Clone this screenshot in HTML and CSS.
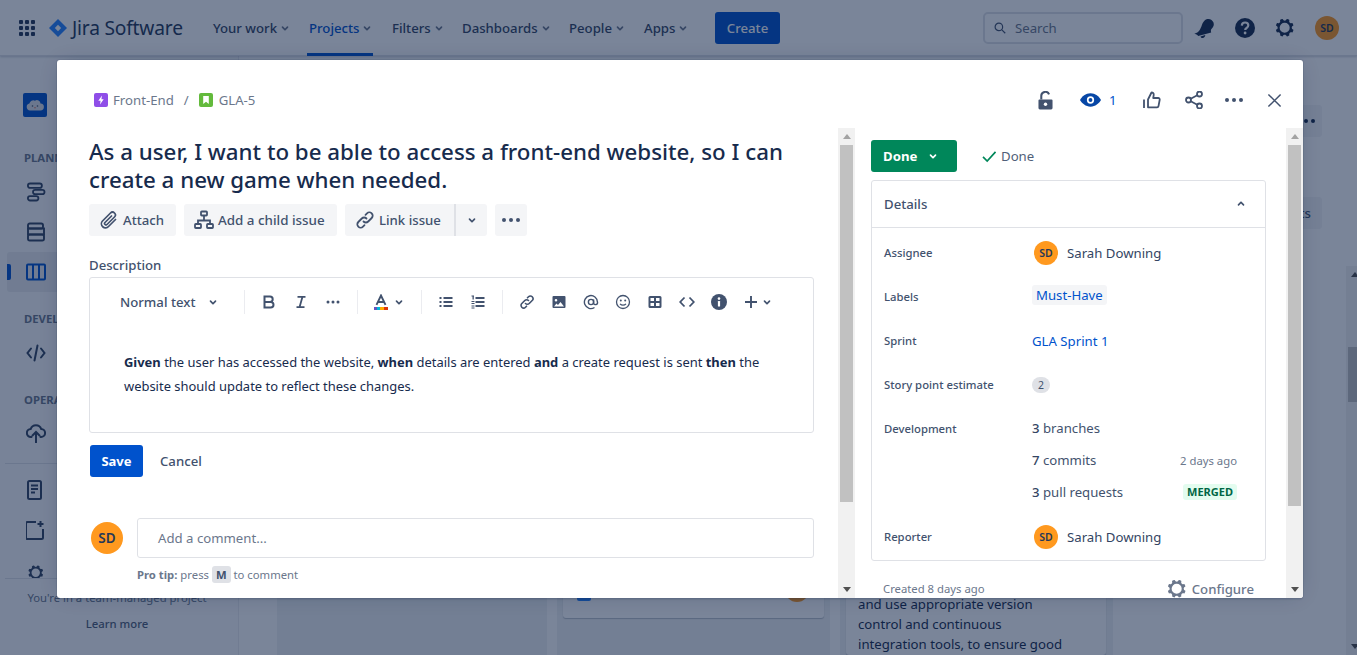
FILE: index.html
```html
<!DOCTYPE html>
<html lang="en">
<head>
<meta charset="utf-8">
<title>GLA-5 - Jira Software</title>
<link rel="stylesheet" href="styles.css">
</head>
<body>
<svg class="defs" width="0" height="0" aria-hidden="true">
  <defs>
    <symbol id="chev" viewBox="0 0 24 24"><path d="M8.292 10.293a1.009 1.009 0 0 0 0 1.419l2.939 2.965c.218.215.5.322.779.322s.556-.107.769-.322l2.93-2.955a1.01 1.01 0 0 0 0-1.419.987.987 0 0 0-1.406 0l-2.298 2.317-2.307-2.327a.99.99 0 0 0-1.406 0z" fill="currentColor"/></symbol>
    <symbol id="gear" viewBox="0 0 24 24"><path fill-rule="evenodd" fill="currentColor" d="M11.701 16.7a5.002 5.002 0 1 1 0-10.003 5.002 5.002 0 0 1 0 10.004m8.368-3.117a1.995 1.995 0 0 1-1.346-1.885c0-.876.563-1.613 1.345-1.885a.48.48 0 0 0 .315-.574 8.947 8.947 0 0 0-.836-1.993.477.477 0 0 0-.598-.195 2.04 2.04 0 0 1-1.29.08 1.988 1.988 0 0 1-1.404-1.395 2.04 2.04 0 0 1 .076-1.297.478.478 0 0 0-.196-.597 8.98 8.98 0 0 0-1.981-.823.477.477 0 0 0-.572.317 1.992 1.992 0 0 1-1.879 1.331 1.993 1.993 0 0 1-1.88-1.33.478.478 0 0 0-.573-.318 8.98 8.98 0 0 0-1.981.823.478.478 0 0 0-.196.597 2.04 2.04 0 0 1 .076 1.297 1.988 1.988 0 0 1-1.404 1.395 2.04 2.04 0 0 1-1.29-.08.477.477 0 0 0-.598.195 8.947 8.947 0 0 0-.836 1.993.48.48 0 0 0 .315.574 1.995 1.995 0 0 1 1.345 1.885c0 .876-.563 1.613-1.345 1.885a.48.48 0 0 0-.315.574c.2.705.482 1.374.836 1.993.12.21.376.29.598.195a2.04 2.04 0 0 1 1.29-.08 1.988 1.988 0 0 1 1.404 1.395 2.04 2.04 0 0 1-.076 1.297.478.478 0 0 0 .196.597c.62.354 1.286.63 1.981.823a.477.477 0 0 0 .572-.317 1.992 1.992 0 0 1 1.88-1.331c.875 0 1.613.561 1.88 1.33a.478.478 0 0 0 .573.318 8.98 8.98 0 0 0 1.981-.823.478.478 0 0 0 .196-.597 2.04 2.04 0 0 1-.076-1.297 1.988 1.988 0 0 1 1.404-1.395 2.04 2.04 0 0 1 1.29.08.477.477 0 0 0 .598-.195 8.947 8.947 0 0 0 .836-1.993.48.48 0 0 0-.315-.574"/></symbol>
    <symbol id="dots" viewBox="0 0 24 24"><circle cx="5" cy="12" r="2" fill="currentColor"/><circle cx="12" cy="12" r="2" fill="currentColor"/><circle cx="19" cy="12" r="2" fill="currentColor"/></symbol>
  </defs>
</svg>

<div class="app">
  <header class="topbar">
    <svg class="ico-grid" viewBox="0 0 16 16"><g fill="currentColor"><rect width="4" height="4" rx="1"/><rect x="6" width="4" height="4" rx="1"/><rect x="12" width="4" height="4" rx="1"/><rect y="6" width="4" height="4" rx="1"/><rect x="6" y="6" width="4" height="4" rx="1"/><rect x="12" y="6" width="4" height="4" rx="1"/><rect y="12" width="4" height="4" rx="1"/><rect x="6" y="12" width="4" height="4" rx="1"/><rect x="12" y="12" width="4" height="4" rx="1"/></g></svg>
    <svg class="logo" viewBox="0 0 18 18"><path fill="#2684ff" d="M9 0l9 9-9 9-9-9z"/><path fill="#fff" d="M9 5.800L12.200 9 9 12.200 5.800 9z"/></svg>
    <span class="brand">Jira Software</span>
    <nav class="nav">
      <span class="nav-item nav-w1">Your work<svg class="chev-s"><use href="#chev"/></svg></span>
      <span class="nav-item nav-w2 is-active">Projects<svg class="chev-s"><use href="#chev"/></svg></span>
      <span class="nav-item nav-w3">Filters<svg class="chev-s"><use href="#chev"/></svg></span>
      <span class="nav-item nav-w4">Dashboards<svg class="chev-s"><use href="#chev"/></svg></span>
      <span class="nav-item nav-w5">People<svg class="chev-s"><use href="#chev"/></svg></span>
      <span class="nav-item nav-w6">Apps<svg class="chev-s"><use href="#chev"/></svg></span>
    </nav>
    <button class="create">Create</button>
    <div class="search">
      <svg class="search-ico" viewBox="0 0 16 16"><circle cx="6.500" cy="6.500" r="5" fill="none" stroke="currentColor" stroke-width="1.600"/><path d="M10.500 10.500L15 15" stroke="currentColor" stroke-width="1.600"/></svg>
      <span>Search</span>
    </div>
    <svg class="top-ico bell" viewBox="0 0 24 24"><path fill="currentColor" d="M13.500 3.200c3.200-1 6 .6 7 3.400.8 2.400.1 4.200-1.800 6.100-1.100 1.100-.9 2.300-.5 3.700l-13 3.700c-.8-1.300-1.600-2-3.200-2.200l-.6-.1c2.600-1 4.400-1.900 5.600-4.300.7-1.400 1.200-2.500 1.900-4.600.9-2.700 2.600-4.900 4.600-5.700zM7.500 20.500l4.800-1.400c-.1 1.700-1.200 2.900-2.600 3-1 .1-1.800-.6-2.200-1.600z"/></svg>
    <svg class="top-ico help" viewBox="0 0 24 24"><circle cx="12" cy="12" r="10" fill="currentColor"/><path d="M8.800 9.600c.1-1.900 1.500-3.100 3.300-3.100 1.900 0 3.200 1.200 3.200 2.800 0 1.300-.6 2-1.700 2.700-.8.500-1.400 1-1.400 2" fill="none" stroke="#fff" stroke-width="2.200"/><circle cx="12.100" cy="17" r="1.400" fill="#fff"/></svg>
    <svg class="top-ico gear-top"><use href="#gear"/></svg>
    <span class="avatar avatar-top">SD</span>
  </header>

  <main class="main">
    <aside class="sidebar">
      <div class="side-nav">
        <div class="project-logo">
          <svg viewBox="0 0 24 24"><rect width="24" height="24" rx="2" fill="#0052cc"/><path fill="#dfe1e6" d="M7 17.500a3.500 3.500 0 0 1-.6-6.900A4 4 0 0 1 12 7.700a3.500 3.500 0 0 1 5.500 2.800 3.500 3.500 0 0 1-.2 7z"/><circle cx="9.500" cy="13" r=".8" fill="#42526e"/><circle cx="14.500" cy="13" r=".8" fill="#42526e"/><path d="M11 14.500h2l-1 1z" fill="#de350b"/></svg>
        </div>
        <div class="side-label side-label-first">PLANNING</div>
        <div class="side-item"><svg class="side-ico" viewBox="0 0 20 20" fill="none" stroke="currentColor" stroke-width="1.800"><rect x="1.900" y="1.500" width="14" height="4.400" rx="2.200"/><rect x="7" y="7.800" width="11.500" height="4.400" rx="2.200"/><rect x="1.900" y="14.100" width="10.500" height="4.400" rx="2.200"/></svg><span>Roadmap</span></div>
        <div class="side-item"><svg class="side-ico" viewBox="0 0 20 20" fill="none" stroke="currentColor" stroke-width="1.900"><rect x="2" y="1.500" width="15" height="5" rx="1.800"/><rect x="2" y="6.500" width="16" height="6"/><rect x="2" y="12.500" width="16" height="6" rx="1.800"/></svg><span>Backlog</span></div>
        <div class="side-item is-current"><svg class="side-ico" viewBox="0 0 20 20" fill="none" stroke="currentColor" stroke-width="2"><rect x="1" y="2.500" width="18" height="15" rx="1"/><path d="M7 2.500v15M13 2.500v15"/></svg><span>Board</span></div>
        <div class="side-label side-label-dev">DEVELOPMENT</div>
        <div class="side-item side-code"><svg class="side-ico" viewBox="0 0 20 20" fill="none" stroke="currentColor" stroke-width="2" stroke-linecap="round"><path d="M5 5.500L1.500 10 5 14.500M15 5.500l3.500 4.500-3.500 4.500M11.500 2.500l-3 15"/></svg><span>Code</span></div>
        <div class="side-label side-label-ops">OPERATIONS</div>
        <div class="side-item side-cloud"><svg class="side-ico" viewBox="0 0 20 20" fill="none" stroke="currentColor" stroke-width="2" stroke-linecap="round"><path d="M5.500 14H5a4 4 0 0 1-.3-8 5.500 5.500 0 0 1 10.500 0 4 4 0 0 1-.2 8h-.5"/><path d="M10 19.500V9.500M6.500 12.500L10 9l3.500 3.500"/></svg><span>Deployments</span></div>
        <div class="side-divider"></div>
        <div class="side-item"><svg class="side-ico" viewBox="0 0 20 20" fill="none" stroke="currentColor" stroke-width="2"><rect x="2" y="1" width="13" height="18" rx="1.500"/><path d="M5 5.500h7M5 9h7M5 12.500h4"/></svg><span>Pages</span></div>
        <div class="side-item"><svg class="side-ico" viewBox="0 0 20 20" fill="none" stroke="currentColor" stroke-width="2"><path d="M10 2H1.500A1.500 1.500 0 0 0 0 3.500v14A1.500 1.500 0 0 0 1.500 19h14a1.500 1.500 0 0 0 1.500-1.500V9"/><path d="M14.500 1v6M11.500 4h6"/></svg><span>Add shortcut</span></div>
        <div class="side-item"><svg class="side-ico side-gear"><use href="#gear"/></svg><span>Project settings</span></div>
      </div>
      <div class="side-foot">
        <div>You're in a team-managed project</div>
        <div class="side-learn">Learn more</div>
      </div>
    </aside>

    <section class="board">
      <div class="board-btn-row board-btn-more"><span class="board-btn board-btn-icon"><svg class="ico16"><use href="#dots"/></svg></span></div>
      <div class="board-btn-row board-btn-ins"><span class="board-btn">Insights</span></div>
      <div class="columns">
        <div class="column column-first"></div>
        <div class="column">
          <div class="card card-short">
            <span class="card-type"></span>
            <span class="card-av"></span>
          </div>
        </div>
        <div class="column">
          <div class="card card-long">
            <p>and use appropriate version control and continuous integration tools, to ensure good</p>
          </div>
        </div>
      </div>
    </section>

    <div class="page-scroll">
      <div class="sbar">
        <div class="sbar-up sbar-up-dark"></div>
        <div class="sbar-thumb sbar-thumb-page"></div>
        <div class="sbar-down"></div>
      </div>
    </div>
  </main>

  <div class="overlay"></div>

  <div class="modal">
    <div class="modal-head">
      <div class="crumbs">
        <svg class="crumb-ico" viewBox="0 0 14 14"><rect width="14" height="14" rx="2" fill="#8f4ee8"/><path d="M8 2.500L4.300 7.800h2.300L6 11.500l3.700-5.300H7.400z" fill="#fff"/></svg>
        <span class="crumb-text">Front-End</span>
        <span class="crumb-sep">/</span>
        <svg class="crumb-ico" viewBox="0 0 14 14"><rect width="14" height="14" rx="2" fill="#63ba3c"/><path d="M4.200 3h5.600v8L7 8.800 4.200 11z" fill="#fff"/></svg>
        <span class="crumb-text crumb-key">GLA-5</span>
      </div>
      <div class="head-actions">
        <svg class="act act-lock" viewBox="0 0 16 20"><path fill="currentColor" d="M1.500 9h13a1 1 0 0 1 1 1v8a1.500 1.500 0 0 1-1.500 1.500H2A1.500 1.500 0 0 1 .5 18v-8a1 1 0 0 1 1-1z"/><path fill="none" stroke="currentColor" stroke-width="2.200" d="M3.500 9V5a4.300 4.300 0 0 1 8.300-1.500"/><circle cx="8" cy="14" r="1.800" fill="#fff"/></svg>
        <svg class="act act-eye" viewBox="0 0 22 14"><path fill="#0747a6" d="M11 0c5 0 9 3.500 11 7-2 3.500-6 7-11 7S2 10.500 0 7c2-3.500 6-7 11-7z"/><circle cx="11" cy="7" r="3.800" fill="#fff"/><circle cx="11" cy="7" r="2" fill="#0747a6"/></svg>
        <span class="act-count">1</span>
        <svg class="act act-like" viewBox="0 0 18 18" fill="none" stroke="currentColor" stroke-width="1.800" stroke-linejoin="round"><path d="M1 8.500v8.500M5 8.500l3.500-7c1.500 0 2.500 1 2.200 2.600l-.5 2.900h5a1.500 1.500 0 0 1 1.500 1.800l-1.200 6.300a1.500 1.500 0 0 1-1.500 1.200H5z"/></svg>
        <svg class="act act-share" viewBox="0 0 18 18" fill="none" stroke="currentColor" stroke-width="1.800"><circle cx="3.500" cy="9" r="2.500"/><circle cx="14.500" cy="3" r="2.500"/><circle cx="14.500" cy="15" r="2.500"/><path d="M5.700 7.800l6.600-3.600M5.700 10.200l6.600 3.600"/></svg>
        <svg class="act act-more"><use href="#dots"/></svg>
        <svg class="act act-close" viewBox="0 0 16 16" fill="none" stroke="currentColor" stroke-width="1.600"><path d="M1.500 1.500l13 13M14.500 1.500l-13 13"/></svg>
      </div>
    </div>

    <div class="modal-body">
      <div class="pane-left">
        <h1 class="title">As a user, I want to be able to access a front-end website, so I can create a new game when needed.</h1>
        <div class="actions">
          <span class="btn btn-attach">
            <svg class="btn-ico" viewBox="0 0 20 20" fill="none" stroke="currentColor" stroke-width="1.700" stroke-linecap="round"><path d="M16.500 9.500l-7 7a4 4 0 0 1-6-5.500l8-8a2.800 2.800 0 0 1 4 4l-7.500 7.500a1.400 1.400 0 0 1-2-2l6.500-6.500"/></svg>Attach
          </span>
          <span class="btn btn-child">
            <svg class="btn-ico" viewBox="0 0 20 20" fill="none" stroke="currentColor" stroke-width="1.800"><rect x="7" y="1.500" width="6" height="4" rx=".8"/><rect x="1" y="14" width="6" height="4" rx=".8"/><rect x="13" y="14" width="6" height="4" rx=".8"/><path d="M10 5.500v4.500M4 14v-3.500h12V14"/></svg>Add a child issue
          </span>
          <span class="btn-split">
            <span class="btn btn-link">
              <svg class="btn-ico" viewBox="0 0 20 20" fill="none" stroke="currentColor" stroke-width="1.800" stroke-linecap="round"><path d="M8.500 11.500a3.300 3.300 0 0 0 4.700 0l3.500-3.500a3.300 3.300 0 0 0-4.700-4.700l-1.500 1.500"/><path d="M11.500 8.500a3.300 3.300 0 0 0-4.700 0l-3.500 3.500A3.300 3.300 0 0 0 8 16.700l1.500-1.500"/></svg>Link issue
            </span>
            <span class="btn btn-caret"><svg class="chev-m"><use href="#chev"/></svg></span>
          </span>
          <span class="btn btn-more"><svg class="ico-dots"><use href="#dots"/></svg></span>
        </div>

        <div class="desc-label">Description</div>
        <div class="editor">
          <div class="toolbar">
            <span class="tb-style">Normal text<svg class="chev-m"><use href="#chev"/></svg></span>
            <span class="tb-sep tb-sep-first"></span>
            <span class="tb-btn"><svg class="tb-ico" viewBox="0 0 16 16"><path fill="none" stroke="currentColor" stroke-width="2" d="M3.500 2.500h5.500a2.700 2.700 0 0 1 0 5.400H3.500zM3.500 7.900h6.200a2.800 2.800 0 0 1 0 5.600H3.500z"/></svg></span>
            <span class="tb-btn"><svg class="tb-ico" viewBox="0 0 16 16"><path fill="none" stroke="currentColor" stroke-width="1.800" d="M4.500 2.800h8M3.500 13.200h8M9.500 2.800L6.500 13.200"/></svg></span>
            <span class="tb-btn"><svg class="tb-ico" viewBox="0 0 16 16"><g fill="currentColor"><circle cx="3" cy="8" r="1.500"/><circle cx="8" cy="8" r="1.500"/><circle cx="13" cy="8" r="1.500"/></g></svg></span>
            <span class="tb-sep"></span>
            <span class="tb-color">
              <svg class="tb-ico tb-ico-a" viewBox="0 0 14 16"><path fill="none" stroke="currentColor" stroke-width="1.900" d="M2.500 10.800L7 1.500l4.500 9.300M4 8h6"/><rect x="0" y="13" width="3" height="3" fill="#6554c0"/><rect x="3" y="13" width="3" height="3" fill="#00b8d9"/><rect x="6" y="13" width="4" height="3" fill="#ffab00"/><rect x="10" y="13" width="4" height="3" fill="#de350b"/></svg>
              <svg class="chev-m"><use href="#chev"/></svg>
            </span>
            <span class="tb-sep"></span>
            <span class="tb-btn"><svg class="tb-ico" viewBox="0 0 16 16"><g fill="currentColor"><rect x="1.500" y="3" width="2" height="2"/><rect x="1.500" y="7" width="2" height="2"/><rect x="1.500" y="11" width="2" height="2"/><rect x="5.500" y="3" width="9" height="2"/><rect x="5.500" y="7" width="9" height="2"/><rect x="5.500" y="11" width="9" height="2"/></g></svg></span>
            <span class="tb-btn"><svg class="tb-ico" viewBox="0 0 16 16"><g fill="currentColor"><rect x="1.500" y="1.500" width="2.500" height="1"/><rect x="2.500" y="2" width="1.300" height="3.500"/><rect x="1.500" y="7" width="3" height="1"/><rect x="1.500" y="9" width="3" height="1"/><rect x="1.500" y="11.500" width="3" height="1"/><rect x="1.500" y="13.500" width="3" height="1"/><rect x="5.500" y="3" width="9" height="2"/><rect x="5.500" y="7" width="9" height="2"/><rect x="5.500" y="11" width="9" height="2"/></g></svg></span>
            <span class="tb-sep"></span>
            <span class="tb-btn"><svg class="tb-ico" viewBox="0 0 16 16" fill="none" stroke="currentColor" stroke-width="1.600" stroke-linecap="round"><path d="M6.500 9.500a2.600 2.600 0 0 0 3.700 0l3-3a2.600 2.600 0 0 0-3.700-3.700L8.500 3.800"/><path d="M9.500 6.500a2.600 2.600 0 0 0-3.700 0l-3 3a2.600 2.600 0 0 0 3.700 3.700l1-1"/></svg></span>
            <span class="tb-btn"><svg class="tb-ico" viewBox="0 0 16 16"><path fill="currentColor" fill-rule="evenodd" d="M2.500 2h11a1 1 0 0 1 1 1v10a1 1 0 0 1-1 1h-11a1 1 0 0 1-1-1V3a1 1 0 0 1 1-1zM5 5a1.300 1.300 0 1 0 0 2.600A1.300 1.300 0 0 0 5 5zM3 12.500h10l-3.500-4.500-2.500 3-1.500-1.500z"/></svg></span>
            <span class="tb-btn"><svg class="tb-ico" viewBox="0 0 16 16" fill="none" stroke="currentColor" stroke-width="1.400"><circle cx="8" cy="8" r="2.600"/><path d="M10.600 5.400v3.800a1.900 1.900 0 0 0 3.800-1.200A6.500 6.500 0 1 0 11.500 13.500"/></svg></span>
            <span class="tb-btn"><svg class="tb-ico" viewBox="0 0 16 16"><circle cx="8" cy="8" r="6.500" fill="none" stroke="currentColor" stroke-width="1.300"/><circle cx="5.800" cy="6.500" r="1" fill="currentColor"/><circle cx="10.200" cy="6.500" r="1" fill="currentColor"/><path d="M5 9.800c1.600 1.800 4.400 1.800 6 0" fill="none" stroke="currentColor" stroke-width="1.200"/></svg></span>
            <span class="tb-btn"><svg class="tb-ico" viewBox="0 0 16 16"><path fill="currentColor" fill-rule="evenodd" d="M3 2h10a1.500 1.500 0 0 1 1.500 1.500v9A1.500 1.500 0 0 1 13 14H3a1.500 1.500 0 0 1-1.500-1.500v-9A1.500 1.500 0 0 1 3 2zM3.500 4v3H7V4zM9 4v3h3.500V4zM3.500 9v3H7V9zM9 9v3h3.500V9z"/></svg></span>
            <span class="tb-btn"><svg class="tb-ico" viewBox="0 0 16 16" fill="none" stroke="currentColor" stroke-width="1.800"><path d="M5.500 3.500L1.200 8l4.300 4.500M10.500 3.500L14.800 8l-4.300 4.500"/></svg></span>
            <span class="tb-btn"><svg class="tb-ico tb-ico-info" viewBox="0 0 16 16"><circle cx="8" cy="8" r="8" fill="currentColor"/><rect x="6.900" y="7" width="2.200" height="5.500" rx=".6" fill="#fff"/><circle cx="8" cy="4.600" r="1.300" fill="#fff"/></svg></span>
            <span class="tb-btn"><svg class="tb-ico" viewBox="0 0 16 16"><path d="M8 2v12M2 8h12" stroke="currentColor" stroke-width="1.900" fill="none"/></svg></span>
            <svg class="chev-m chev-plus"><use href="#chev"/></svg>
          </div>
          <p class="editor-text"><strong>Given</strong> the user has accessed the website, <strong>when</strong> details are entered <strong>and</strong> a create request is sent <strong>then</strong> the website should update to reflect these changes.</p>
        </div>

        <div class="save-row">
          <span class="btn-save">Save</span>
          <span class="btn-cancel">Cancel</span>
        </div>

        <div class="comment">
          <span class="avatar avatar-lg">SD</span>
          <div class="comment-main">
            <div class="comment-input">Add a comment...</div>
            <div class="pro-tip"><strong>Pro tip:</strong> press <kbd class="key">M</kbd> to comment</div>
          </div>
        </div>
      </div>

      <div class="sbar">
        <div class="sbar-up"></div>
        <div class="sbar-thumb sbar-thumb-left"></div>
        <div class="sbar-down"></div>
      </div>

      <div class="pane-right">
        <div class="status-row">
          <span class="btn-status">Done<svg class="chev-m"><use href="#chev"/></svg></span>
          <svg class="check" viewBox="0 0 16 14"><path d="M1 7.500l4.500 4.500L14.500 2" fill="none" stroke="#00875a" stroke-width="1.800"/></svg>
          <span class="status-text">Done</span>
        </div>

        <div class="details">
          <div class="details-head">
            <span>Details</span>
            <svg class="chev-m chev-up"><use href="#chev"/></svg>
          </div>
          <dl class="rows">
            <div class="row row-assignee"><dt>Assignee</dt><dd class="person"><span class="avatar avatar-sm">SD</span>Sarah Downing</dd></div>
            <div class="row"><dt>Labels</dt><dd><span class="label-chip">Must-Have</span></dd></div>
            <div class="row"><dt>Sprint</dt><dd class="link">GLA Sprint 1</dd></div>
            <div class="row"><dt>Story point estimate</dt><dd class="points-cell"><span class="points">2</span></dd></div>
            <div class="row row-dev"><dt>Development</dt><dd class="dev-line"><span><b>3</b> branches</span></dd></div>
            <div class="row row-dev"><dt></dt><dd class="dev-line"><span><b>7</b> commits</span><span class="dev-meta">2 days ago</span></dd></div>
            <div class="row row-dev"><dt></dt><dd class="dev-line"><span><b>3</b> pull requests</span><span class="lozenge">MERGED</span></dd></div>
            <div class="row row-reporter"><dt>Reporter</dt><dd class="person"><span class="avatar avatar-sm">SD</span>Sarah Downing</dd></div>
          </dl>
        </div>

        <div class="meta-row">
          <span class="created">Created 8 days ago</span>
          <span class="configure"><svg class="cfg-ico"><use href="#gear"/></svg>Configure</span>
        </div>
      </div>

      <div class="sbar">
        <div class="sbar-up"></div>
        <div class="sbar-thumb sbar-thumb-right"></div>
        <div class="sbar-down"></div>
      </div>
    </div>
  </div>
</div>
</body>
</html>
```

FILE: styles.css
```css
* { box-sizing: border-box; }
html, body { margin: 0; padding: 0; }
body { font-family: "Noto Sans", "Open Sans", sans-serif; font-size: 13.2px; color: #172b4d; background: #fff; }
.defs { position: absolute; }
svg { display: block; flex-shrink: 0; }

.app { position: relative; width: 1357px; height: 655px; overflow: hidden; }

/* top bar */
.topbar { height: 56px; display: flex; align-items: center; background: #fff; border-bottom: 1px solid #dfe1e6; box-shadow: 0 1px 2px rgba(9,30,66,.2); color: #172b4d; position: relative; }
.ico-grid { width: 16px; height: 16px; margin-left: 19px; color: #253858; }
.logo { width: 18px; height: 18px; margin-left: 14px; }
.brand { margin-left: 5px; font-size: 19.2px; width: 133px; color: #253858; line-height: 24px; letter-spacing: -.2px; white-space: nowrap; }
.nav { display: flex; height: 56px; margin-left: 8px; }
.nav-item { display: flex; align-items: center; font-weight: 500; color: #344563; height: 56px; position: relative; white-space: nowrap; }
.nav-w1 { width: 96px; }
.nav-w2 { width: 83px; color: #0052cc; }
.nav-w3 { width: 70px; }
.nav-w4 { width: 107px; }
.nav-w5 { width: 75px; }
.nav-w6 { width: 71px; }
.is-active::after { content: ""; position: absolute; left: -2px; right: 19px; bottom: 0; height: 3px; background: #0052cc; }
.chev-s { width: 20px; height: 20px; margin-left: -2px; color: #6b778c; }
.create { width: 65px; height: 32px; border: 0; border-radius: 3px; background: #0052cc; color: #fff; font: 500 13.2px "Noto Sans", sans-serif; margin-left: 0; padding: 0; }
.search { margin-left: 203px; width: 200px; height: 32px; border: 2px solid #dfe1e6; border-radius: 5px; display: flex; align-items: center; color: #6b778c; }
.search-ico { width: 12px; height: 12px; margin: 0 9px 0 9px; color: #42526e; }
.top-ico { width: 24px; height: 24px; color: #172b4d; }
.bell { margin-left: 10px; }
.help { margin-left: 16px; }
.gear-top { margin-left: 16px; }
.avatar { display: flex; align-items: center; justify-content: center; border-radius: 50%; background: #ff991f; color: #253858; font-weight: 600; flex-shrink: 0; }
.avatar-top { width: 24px; height: 24px; font-size: 10.5px; margin-left: 18px; }
.avatar-sm { width: 24px; height: 24px; font-size: 10.5px; margin: 0 9px 0 2px; }
.avatar-lg { width: 32px; height: 32px; font-size: 13.5px; margin: 4px 14px 0 2px; }

/* page below the bar */
.main { display: flex; height: 599px; }
.sidebar { width: 239px; flex-shrink: 0; background: #fafbfc; border-right: 1px solid #ebecf0; display: flex; flex-direction: column; }
.side-nav { height: 522px; overflow: hidden; padding-top: 37px; }
.project-logo { margin-left: 23px; }
.project-logo svg { width: 24px; height: 24px; }
.side-label { font-size: 11.3px; font-weight: 700; line-height: 16px; color: #6b778c; margin-left: 24px; white-space: nowrap; }
.side-label-first { margin-top: 33px; margin-bottom: 6px; }
.side-label-dev { margin-top: 19px; margin-bottom: 6px; }
.side-label-ops { margin-top: 19px; margin-bottom: 5px; }
.side-item { height: 40px; display: flex; align-items: center; margin: 0 8px 0 7px; padding-left: 19px; color: #344563; position: relative; border-radius: 3px; }
.side-item span { margin-left: 16px; }
.side-ico { width: 20px; height: 20px; }
.side-gear { margin-top: 6px; }
.is-current { background: #ebecf0; color: #0052cc; }
.is-current::before { content: ""; position: absolute; left: 0; top: 12px; width: 4px; height: 16px; background: #0052cc; border-radius: 0 2px 2px 0; }
.side-divider { height: 1px; background: #dfe1e6; margin: 10px 0 6px 5px; }
.side-foot { flex: 1; border-top: 1px solid #dfe1e6; margin-left: 5px; text-align: center; font-size: 11.3px; color: #6b778c; padding-top: 10px; padding-right: 9px; line-height: 18px; white-space: nowrap; }
.side-learn { margin-top: 8px; font-weight: 500; color: #505f79; }

.board { flex: 1; min-width: 0; padding-left: 38px; display: flex; flex-direction: column; }
.board-btn-row { display: flex; justify-content: flex-end; padding-right: 24px; }
.board-btn-more { margin-top: 49px; }
.board-btn-ins { margin-top: 60px; }
.board-btn { height: 32px; display: flex; align-items: center; padding: 0 11px; background: #f4f5f7; border-radius: 3px; color: #42526e; font-weight: 500; }
.board-btn-icon { width: 32px; justify-content: center; padding: 0; color: #172b4d; }
.ico16 { width: 24px; height: 24px; }
.columns { display: flex; gap: 10px; margin-top: 10px; flex: 1; min-height: 0; }
.column { width: 273px; background: #f0f1f3; padding: 0 6px; display: flex; flex-direction: column; justify-content: flex-end; }
.column-first { width: 270px; }
.card { background: #fff; box-shadow: 0 1px 1px rgba(9,30,66,.25); border-radius: 3px; }
.card-short { height: 120px; margin-bottom: 37px; position: relative; width: 261px; }
.card-type { position: absolute; left: 14px; bottom: 17px; width: 14px; height: 14px; background: #2684ff; border-radius: 2px; }
.card-av { position: absolute; right: 15px; bottom: 16px; width: 24px; height: 24px; background: #ff991f; border-radius: 50%; }
.card-long { height: 160px; padding: 0 12px; width: 260px; display: flex; flex-direction: column; justify-content: flex-end; }
.card-long p { margin: 0; line-height: 20px; padding-bottom: 1px; width: 212px; }

.page-scroll { width: 11px; margin-top: 210px; overflow: hidden; flex-shrink: 0; }
.page-scroll .sbar { background: #f1f1f1; height: 389px; }
.sbar { width: 17px; flex-shrink: 0; background: #f1f1f1; display: flex; flex-direction: column; }
.sbar-up, .sbar-down { height: 17px; display: flex; align-items: center; justify-content: center; }
.sbar-up::before { content: ""; border: 4px solid transparent; border-top: 0; border-bottom: 5px solid #a3a3a3; }
.sbar-up-dark::before { border-bottom-color: #505050; }
.sbar-down { margin-top: auto; }
.sbar-down::before { content: ""; border: 4px solid transparent; border-bottom: 0; border-top: 5px solid #505050; }
.sbar-thumb { width: 13px; margin-left: 2px; background: #c1c1c1; }
.sbar-thumb-left { height: 357px; }
.sbar-thumb-right { height: 361px; }
.sbar-thumb-page { height: 55px; margin-top: 64px; }

.overlay { position: absolute; inset: 0; background: rgba(9,30,66,.54); }

/* modal */
.modal { position: absolute; left: 57px; top: 60px; width: 1246px; height: 538px; background: #fff; border-radius: 3px; box-shadow: 0 0 0 1px rgba(9,30,66,.08), 0 2px 1px rgba(9,30,66,.08), 0 0 20px -6px rgba(9,30,66,.31); overflow: hidden; display: flex; flex-direction: column; }
.modal-head { height: 68px; flex-shrink: 0; display: flex; justify-content: space-between; align-items: flex-start; padding-left: 37px; }
.crumbs { display: flex; align-items: center; height: 20px; margin-top: 30px; color: #6b778c; }
.crumb-ico { width: 14px; height: 14px; }
.crumb-text { margin-left: 5px; }
.crumb-key { margin-left: 6px; }
.crumb-sep { margin: 0 10px; }
.head-actions { position: relative; display: flex; align-items: center; height: 24px; margin-top: 28px; color: #42526e; }
.act { flex-shrink: 0; }
.act-lock { width: 15px; height: 19px; }
.act-eye { width: 21px; height: 14px; margin-left: 27px; }
.act-count { width: 8px; margin-left: 8px; color: #0052cc; font-size: 13.2px; }
.act-like { width: 18px; height: 18px; margin-left: 26px; }
.act-share { width: 18px; height: 18px; margin-left: 24px; }
.act-more { width: 24px; height: 24px; margin-left: 19px; }
.act-close { width: 15px; height: 15px; margin: 0 21px 0 21px; }

.modal-body { flex: 1; min-height: 0; display: flex; }
.pane-left { width: 781px; flex-shrink: 0; padding: 10px 24px 0 32px; }
.pane-right { width: 431px; flex-shrink: 0; padding: 12px 21px 0 16px; overflow: hidden; }

.title { margin: 0; font-size: 22.3px; font-weight: 500; line-height: 28px; color: #172b4d; }
.actions { display: flex; gap: 8px; margin-top: 10px; }
.btn { height: 32px; display: inline-flex; align-items: center; background: #f4f5f7; border-radius: 3px; color: #42526e; font-weight: 500; white-space: nowrap; }
.btn-ico { width: 20px; height: 20px; }
.btn-attach { width: 87px; padding-left: 10px; gap: 4px; }
.btn-child { width: 153px; padding-left: 10px; gap: 4px; font-size: 13.4px; }
.btn-split { display: flex; }
.btn-link { width: 109px; padding-left: 10px; gap: 4px; border-radius: 3px 0 0 3px; }
.btn-caret { width: 33px; justify-content: center; border-left: 2px solid #dfe1e6; border-radius: 0 3px 3px 0; }
.btn-more { width: 32px; justify-content: center; }
.ico-dots { width: 24px; height: 24px; }
.chev-m { width: 20px; height: 20px; color: #42526e; }

.desc-label { margin-top: 20px; line-height: 18px; font-weight: 500; color: #42526e; }
.editor { margin-top: 3px; height: 156px; border: 1px solid #dfe1e6; border-radius: 3px; }
.toolbar { display: flex; align-items: center; height: 48px; color: #42526e; }
.tb-style { display: flex; align-items: center; width: 109px; margin-left: 30px; font-weight: 500; color: #42526e; justify-content: space-between; padding-right: 6px; white-space: nowrap; }
.tb-sep { width: 1px; height: 24px; background: #ebecf0; margin: 0 8px; flex-shrink: 0; }
.tb-sep-first { margin-left: 15px; }
.tb-btn { width: 32px; height: 32px; display: flex; align-items: center; justify-content: center; }
.tb-ico { width: 16px; height: 16px; }
.tb-color { display: flex; align-items: center; padding-left: 8px; width: 47px; }
.tb-ico-a { width: 14px; height: 16px; }
.tb-color .chev-m { margin-left: 1px; }
.chev-plus { margin-left: -10px; }
.editor-text { margin: 24px 34px 0; font-size: 12.95px; line-height: 24px; color: #172b4d; }
.editor-text strong { font-weight: 700; }

.save-row { display: flex; align-items: center; margin-top: 12px; margin-left: 1px; }
.btn-save { width: 53px; height: 32px; display: flex; align-items: center; justify-content: center; background: #0052cc; color: #fff; font-size: 13px; font-weight: 700; border-radius: 3px; }
.btn-cancel { margin-left: 17px; color: #42526e; font-weight: 500; }

.comment { display: flex; margin-top: 41px; }
.comment-main { flex: 1; }
.comment-input { height: 40px; border: 1px solid #dfe1e6; border-radius: 3px; padding-left: 20px; display: flex; align-items: center; color: #6b778c; }
.pro-tip { margin-top: 7px; font-size: 11.3px; color: #6b778c; line-height: 20px; white-space: nowrap; }
.pro-tip strong { font-weight: 700; }
.key { display: inline-block; font: 700 11.3px "Noto Sans", sans-serif; background: #dfe1e6; color: #42526e; border-radius: 3px; padding: 0 4px; line-height: 17px; margin: 0; }

.status-row { display: flex; align-items: center; height: 32px; }
.btn-status { width: 86px; height: 32px; display: flex; align-items: center; background: #00875a; color: #fff; font-weight: 700; padding-left: 12px; border-radius: 3px; gap: 6px; }
.btn-status .chev-m { color: #fff; }
.check { width: 15px; height: 13px; margin-left: 25px; }
.status-text { margin-left: 4px; color: #505f79; }

.details { width: 395px; margin-top: 8px; height: 381px; border: 1px solid #dfe1e6; border-radius: 3px; }
.details-head { height: 47px; display: flex; align-items: center; justify-content: space-between; padding: 0 14px 0 12px; border-bottom: 1px solid #dfe1e6; font-weight: 500; color: #42526e; }
.chev-up { transform: rotate(180deg); }
.rows { margin: 0; padding: 3px 28px 0 12px; }
.row { display: flex; align-items: center; height: 44px; }
.row dt { width: 148px; flex-shrink: 0; font-size: 11.3px; font-weight: 500; color: #42526e; white-space: nowrap; padding-bottom: 2px; }
.row dd { margin: 0; flex: 1; color: #172b4d; }
.row-dev { height: 32px; }
.row-dev:nth-child(5) { margin-top: 6px; }
.row-reporter { margin-top: 6px; }
.person { display: flex; align-items: center; color: #344563 !important; }
.label-chip { display: inline-block; height: 20px; line-height: 20px; background: #f4f5f7; color: #0052cc; border-radius: 3px; padding: 0 4px; transform: translateY(-2px); }
.link { color: #0052cc !important; }
.points-cell { padding-bottom: 3px; }
.points { display: inline-block; min-width: 18px; height: 16px; line-height: 16px; background: #dfe1e6; border-radius: 8px; text-align: center; font-size: 10.5px; color: #42526e; }
.dev-line { display: flex; justify-content: space-between; align-items: center; color: #42526e !important; padding-bottom: 2px; }
.dev-line b { font-weight: 500; color: #344563; }
.dev-meta { font-size: 11.3px; color: #6b778c; }
.lozenge { background: #e3fcef; color: #006644; font-size: 11px; font-weight: 700; border-radius: 3px; padding: 0 4px; line-height: 16px; }

.meta-row { display: flex; align-items: center; justify-content: space-between; width: 371px; margin: 11px 0 0 12px; height: 32px; }
.created { font-size: 11.3px; color: #6b778c; }
.configure { display: flex; align-items: center; gap: 3px; color: #6b778c; font-weight: 500; padding-top: 2px; }
.cfg-ico { width: 24px; height: 24px; }
```
